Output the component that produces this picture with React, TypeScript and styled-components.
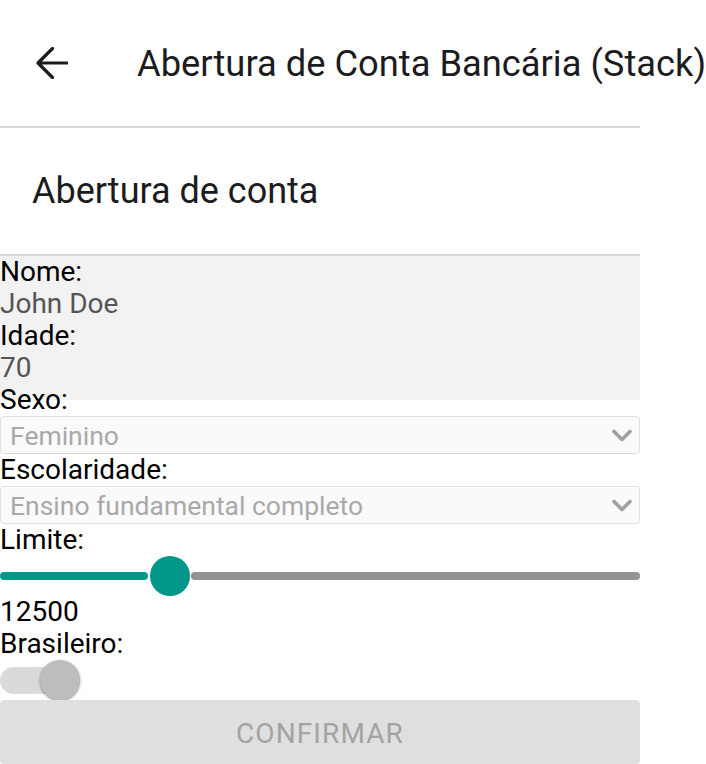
import React from "react";
import styled, { createGlobalStyle } from "styled-components";

const GlobalStyle = createGlobalStyle`
  html, body {
    margin: 0;
    padding: 0;
    background: #ffffff;
  }
  body {
    font-family: Roboto, "Liberation Sans", Arial, sans-serif;
    overflow: hidden;
  }
  * { box-sizing: border-box; }
`;

const Screen = styled.div`
  width: 640px;
  display: flex;
  flex-direction: column;
`;

const Header = styled.header`
  height: 128px;
  display: flex;
  align-items: center;
  padding-left: 36px;
  border-bottom: 2px solid #d8d8d8;
  white-space: nowrap;
`;

const BackButton = styled.button`
  width: 32px;
  height: 32px;
  padding: 0;
  border: 0;
  background: transparent;
  display: flex;
  align-items: center;
  justify-content: center;
  margin-right: 69px;
  flex-shrink: 0;
`;

const HeaderTitle = styled.h1`
  margin: 0;
  font-size: 36.3px;
  font-weight: 400;
  color: #1c1c1e;
  line-height: 40px;
  margin-top: 1px;
`;

const SectionHead = styled.div`
  height: 128px;
  display: flex;
  align-items: center;
  padding-left: 32px;
  border-bottom: 2px solid #d8d8d8;
`;

const SectionTitle = styled.h2`
  margin: 0;
  font-size: 36px;
  font-weight: 400;
  color: #1c1c1e;
  line-height: 40px;
`;

const Form = styled.div`
  display: flex;
  flex-direction: column;
`;

const ReadOnlyGroup = styled.div`
  background: #f2f2f2;
  padding-bottom: 16px;
  display: flex;
  flex-direction: column;
`;

const Label = styled.div<{ $overlap?: boolean }>`
  font-size: 28px;
  line-height: 32px;
  color: #000000;
  height: 32px;
  margin-top: ${(p) => (p.$overlap ? "-16px" : "0")};
`;

const Value = styled.div`
  font-size: 28px;
  line-height: 32px;
  color: #555555;
  height: 32px;
`;

const SelectBox = styled.div`
  height: 38px;
  border: 1px solid #dedede;
  border-radius: 4px;
  background: #fafafa;
  display: flex;
  align-items: center;
  justify-content: space-between;
  padding: 0 7px 0 9px;
  font-size: 26.5px;
  color: #a9a9a9;
`;

const SliderRow = styled.div`
  height: 40px;
  display: flex;
  align-items: center;
`;

const SliderFill = styled.div`
  height: 8px;
  border-radius: 4px;
  background: #009688;
  margin-right: 2px;
`;

const SliderThumb = styled.div`
  width: 40px;
  height: 40px;
  border-radius: 50%;
  background: #009688;
  flex-shrink: 0;
`;

const SliderRest = styled.div`
  flex: 1;
  height: 8px;
  border-radius: 4px;
  background: #939393;
  margin-left: 1px;
`;

const SwitchRow = styled.div`
  height: 40px;
  display: flex;
  align-items: center;
`;

const SwitchTrack = styled.div`
  width: 60px;
  height: 27px;
  border-radius: 14px;
  background: #dadada;
`;

const SwitchThumb = styled.div`
  width: 40px;
  height: 40px;
  border-radius: 50%;
  background: #bdbdbd;
  margin-left: -20px;
  box-shadow: 0 1px 3px rgba(0, 0, 0, 0.35), 0 1px 1px rgba(0, 0, 0, 0.12);
`;

const ConfirmButton = styled.button`
  height: 64px;
  width: 100%;
  border: 0;
  border-radius: 4px;
  background: #dfdfdf;
  color: #a3a3a3;
  font-family: Roboto, "Liberation Sans", Arial, sans-serif;
  font-size: 28px;
  letter-spacing: 1.1px;
  text-transform: uppercase;
  padding: 0;
  padding-top: 2px;
`;

const BackArrow = () => (
  <svg width="32" height="32" viewBox="0 0 32 32" fill="none">
    <path
      d="M2 16 H31 M16.5 1.5 L2 16 L16.5 30.5"
      stroke="#1c1c1e"
      strokeWidth="3.2"
      strokeLinecap="round"
      strokeLinejoin="round"
    />
  </svg>
);

const Chevron = () => (
  <svg width="20" height="13" viewBox="0 0 20 13" fill="none">
    <path
      d="M2 2.5 L10 10.5 L18 2.5"
      stroke="#a0a0a0"
      strokeWidth="3.6"
      strokeLinecap="round"
      strokeLinejoin="round"
    />
  </svg>
);

const Select = ({ value }: { value: string }) => (
  <SelectBox>
    <span>{value}</span>
    <Chevron />
  </SelectBox>
);

export default function App() {
  const limite = 12500;
  const min = 0;
  const max = 50000;
  const trackWidth = 592;
  const fillWidth = Math.round(((limite - min) / (max - min)) * trackWidth);

  return (
    <>
      <GlobalStyle />
      <Screen>
        <Header>
          <BackButton aria-label="Voltar">
            <BackArrow />
          </BackButton>
          <HeaderTitle>Abertura de Conta Bancária (Stack)</HeaderTitle>
        </Header>
        <SectionHead>
          <SectionTitle>Abertura de conta</SectionTitle>
        </SectionHead>
        <Form>
          <ReadOnlyGroup>
            <Label>Nome:</Label>
            <Value>John Doe</Value>
            <Label>Idade:</Label>
            <Value>70</Value>
          </ReadOnlyGroup>
          <Label $overlap>Sexo:</Label>
          <Select value="Feminino" />
          <Label>Escolaridade:</Label>
          <Select value="Ensino fundamental completo" />
          <Label>Limite:</Label>
          <SliderRow>
            <SliderFill style={{ width: fillWidth }} />
            <SliderThumb />
            <SliderRest />
          </SliderRow>
          <Label>{limite}</Label>
          <Label>Brasileiro:</Label>
          <SwitchRow>
            <SwitchTrack />
            <SwitchThumb />
          </SwitchRow>
          <ConfirmButton disabled>Confirmar</ConfirmButton>
        </Form>
      </Screen>
    </>
  );
}
